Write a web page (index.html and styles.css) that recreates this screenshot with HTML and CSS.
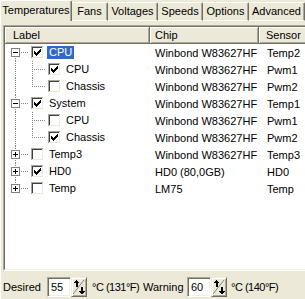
FILE: index.html
```html
<!DOCTYPE html>
<html>
<head>
<meta charset="utf-8">
<link rel="stylesheet" href="styles.css">
</head>
<body>
<div class="win">
  <div class="tabs">
    <div class="tab sel t1">Temperatures</div>
    <div class="tab t2">Fans</div>
    <div class="tab t3">Voltages</div>
    <div class="tab t4">Speeds</div>
    <div class="tab t5">Options</div>
    <div class="tab t6">Advanced</div>
  </div>
  <div class="page">
    <div class="list">
      <div class="list-in">
        <div class="hdr">
          <div class="hc h1">Label</div>
          <div class="hc h2">Chip</div>
          <div class="hc h3">Sensor</div>
        </div>
        <div class="rows">
          <div class="row">
            <div class="lab">
              <span class="ln first"><svg class="exp" width="9" height="9"><rect x="0.5" y="0.5" width="8" height="8" fill="#fff" stroke="#808080"/><path d="M2 4.5h5" stroke="#000"/></svg></span>
              <svg class="cb" width="13" height="13"><use href="#cbox"/><use href="#chk"/></svg>
              <span class="txt selected">CPU</span>
            </div>
            <div class="chip">Winbond W83627HF</div><div class="sen">Temp2</div>
          </div>
          <div class="row">
            <div class="lab">
              <span class="pass"></span><span class="ln tee"></span>
              <svg class="cb" width="13" height="13"><use href="#cbox"/><use href="#chk"/></svg>
              <span class="txt">CPU</span>
            </div>
            <div class="chip">Winbond W83627HF</div><div class="sen">Pwm1</div>
          </div>
          <div class="row">
            <div class="lab">
              <span class="pass"></span><span class="ln ell"></span>
              <svg class="cb" width="13" height="13"><use href="#cbox"/></svg>
              <span class="txt">Chassis</span>
            </div>
            <div class="chip">Winbond W83627HF</div><div class="sen">Pwm2</div>
          </div>
          <div class="row">
            <div class="lab">
              <span class="ln tee"><svg class="exp" width="9" height="9"><rect x="0.5" y="0.5" width="8" height="8" fill="#fff" stroke="#808080"/><path d="M2 4.5h5" stroke="#000"/></svg></span>
              <svg class="cb" width="13" height="13"><use href="#cbox"/><use href="#chk"/></svg>
              <span class="txt">System</span>
            </div>
            <div class="chip">Winbond W83627HF</div><div class="sen">Temp1</div>
          </div>
          <div class="row">
            <div class="lab">
              <span class="pass"></span><span class="ln tee"></span>
              <svg class="cb" width="13" height="13"><use href="#cbox"/></svg>
              <span class="txt">CPU</span>
            </div>
            <div class="chip">Winbond W83627HF</div><div class="sen">Pwm1</div>
          </div>
          <div class="row">
            <div class="lab">
              <span class="pass"></span><span class="ln ell"></span>
              <svg class="cb" width="13" height="13"><use href="#cbox"/><use href="#chk"/></svg>
              <span class="txt">Chassis</span>
            </div>
            <div class="chip">Winbond W83627HF</div><div class="sen">Pwm2</div>
          </div>
          <div class="row">
            <div class="lab">
              <span class="ln tee"><svg class="exp" width="9" height="9"><rect x="0.5" y="0.5" width="8" height="8" fill="#fff" stroke="#808080"/><path d="M2 4.5h5M4.5 2v5" stroke="#000"/></svg></span>
              <svg class="cb" width="13" height="13"><use href="#cbox"/></svg>
              <span class="txt">Temp3</span>
            </div>
            <div class="chip">Winbond W83627HF</div><div class="sen">Temp3</div>
          </div>
          <div class="row">
            <div class="lab">
              <span class="ln tee"><svg class="exp" width="9" height="9"><rect x="0.5" y="0.5" width="8" height="8" fill="#fff" stroke="#808080"/><path d="M2 4.5h5M4.5 2v5" stroke="#000"/></svg></span>
              <svg class="cb" width="13" height="13"><use href="#cbox"/><use href="#chk"/></svg>
              <span class="txt">HD0</span>
            </div>
            <div class="chip">HD0 (80,0GB)</div><div class="sen">HD0</div>
          </div>
          <div class="row">
            <div class="lab">
              <span class="ln ell"><svg class="exp" width="9" height="9"><rect x="0.5" y="0.5" width="8" height="8" fill="#fff" stroke="#808080"/><path d="M2 4.5h5M4.5 2v5" stroke="#000"/></svg></span>
              <svg class="cb" width="13" height="13"><use href="#cbox"/></svg>
              <span class="txt">Temp</span>
            </div>
            <div class="chip">LM75</div><div class="sen">Temp</div>
          </div>
        </div>
      </div>
    </div>
    <div class="foot">
      <span class="lbl w-des">Desired</span>
      <span class="edit">55</span>
      <span class="spin"><svg width="12" height="16"><use href="#spn"/></svg></span>
      <span class="lbl deg w-c1">°C (131°F)</span>
      <span class="lbl w-warn">Warning</span>
      <span class="edit">60</span>
      <span class="spin"><svg width="12" height="16"><use href="#spn"/></svg></span>
      <span class="lbl deg w-c2">°C (140°F)</span>
    </div>
  </div>
</div>
<svg class="defs" width="0" height="0">
  <defs>
    <g id="cbox" shape-rendering="crispEdges">
      <rect x="0" y="0" width="13" height="13" fill="#fff"/>
      <path d="M0 0h12v1h-11v11h-1z" fill="#aca899"/>
      <path d="M1 1h10v1h-9v9h-1z" fill="#404040"/>
      <path d="M12 0h1v13h-13v-1h12z" fill="#fff"/>
      <path d="M11 1h1v11h-11v-1h10z" fill="#ece9d8"/>
    </g>
    <path id="chk" shape-rendering="crispEdges" fill="#000" d="M3 5h1v3h-1zM4 6h1v3h-1zM5 7h1v3h-1zM6 6h1v3h-1zM7 5h1v3h-1zM8 4h1v3h-1zM9 3h1v3h-1z"/>
    <g id="spn" shape-rendering="crispEdges">
      <path d="M0 15L11 1" stroke="#808080" stroke-width="1" fill="none" shape-rendering="auto"/>
      <path d="M3 1h1v1h-1zM2 2h3v1h-3zM1 3h5v1h-5zM3 4h2v4h-2z" fill="#000"/>
      <path d="M8 8h2v4h-2zM6 12h6v1h-6zM7 13h4v1h-4zM8 14h2v1h-2z" fill="#000"/>
    </g>
  </defs>
</svg>
</body>
</html>
```
FILE: styles.css
```css
html, body {
  margin: 0;
  padding: 0;
}
body {
  width: 305px;
  height: 299px;
  overflow: hidden;
  background: #ece9d8;
  font-family: "Liberation Sans", Arial, sans-serif;
  font-size: 11px;
  color: #000;
}
.win {
  width: 305px;
  height: 299px;
  display: flex;
  flex-direction: column;
}
.tabs {
  display: flex;
  align-items: flex-end;
  height: 21px;
  flex: none;
}
.tab {
  box-sizing: border-box;
  height: 19px;
  display: flex;
  align-items: center;
  justify-content: center;
  border-top: 1px solid #fff;
  border-left: 1px solid #fff;
  border-right: 1px solid #716f64;
  border-bottom: 1px solid #fff;
  border-radius: 2px 2px 0 0;
  padding-bottom: 1px;
  white-space: nowrap;
  box-shadow: inset -1px 0 0 #aca899;
}
.tab.sel {
  height: 21px;
  border-bottom: none;
  padding-bottom: 3px;
}
.t1 { width: 72px; }
.t2 { width: 36px; border-left: none; }
.t3 { width: 50px; border-left: none; }
.t4 { width: 45px; border-left: none; }
.t5 { width: 46px; border-left: none; }
.t6 { width: 56px; border-left: none; }
.page {
  flex: 1;
  border-left: 1px solid #fff;
  padding: 4px 0 0 2px;
  display: flex;
  flex-direction: column;
}
.list {
  width: 310px;
  height: 246px;
  box-sizing: border-box;
  border: 1px solid;
  border-color: #aca899 #fff #fff #aca899;
  flex: none;
}
.list-in {
  height: 100%;
  box-sizing: border-box;
  border: 1px solid;
  border-color: #716f64 #f1efe2 #f1efe2 #716f64;
  background: #fff;
  overflow: hidden;
}
.hdr {
  display: grid;
  grid-template-columns: 145px 109px 1fr;
  height: 17px;
}
.hc {
  box-sizing: border-box;
  height: 17px;
  background: #ece9d8;
  border-right: 1px solid #716f64;
  border-bottom: 1px solid #716f64;
  box-shadow: inset 1px 1px 0 #fff, inset -1px -1px 0 #aca899;
  display: flex;
  align-items: center;
  padding-bottom: 1px;
}
.h1 { padding-left: 8px; }
.h2 { padding-left: 5px; }
.h3 { padding-left: 7px; }
.row {
  display: grid;
  grid-template-columns: 145px 109px 1fr;
  height: 17px;
  align-items: center;
  white-space: nowrap;
}
.lab {
  display: flex;
  align-items: center;
  height: 17px;
  padding-left: 2px;
}
.chip { padding-left: 5px; }
.sen { padding-left: 8px; }
.ln, .pass {
  flex: none;
  height: 17px;
  display: block;
}
.pass {
  width: 17px;
  background: repeating-linear-gradient(to bottom, #808080 0 1px, transparent 1px 2px) 8px 0 / 1px 17px no-repeat;
}
.ln { width: 24px; }
.ln.first {
  background:
    repeating-linear-gradient(to bottom, #808080 0 1px, transparent 1px 2px) 8px 8px / 1px 9px no-repeat,
    repeating-linear-gradient(to right, #808080 0 1px, transparent 1px 2px) 8px 8px / 14px 1px no-repeat;
}
.ln.tee {
  background:
    repeating-linear-gradient(to bottom, #808080 0 1px, transparent 1px 2px) 8px 0 / 1px 17px no-repeat,
    repeating-linear-gradient(to right, #808080 0 1px, transparent 1px 2px) 8px 8px / 14px 1px no-repeat;
}
.ln.ell {
  background:
    repeating-linear-gradient(to bottom, #808080 0 1px, transparent 1px 2px) 8px 0 / 1px 9px no-repeat,
    repeating-linear-gradient(to right, #808080 0 1px, transparent 1px 2px) 8px 8px / 14px 1px no-repeat;
}
.exp {
  display: block;
  margin: 4px 0 0 4px;
}
.cb {
  display: block;
  flex: none;
}
.txt {
  margin-left: 3px;
  padding: 0 2px;
  height: 13px;
  line-height: 13px;
}
.txt.selected {
  background: #316ac5;
  color: #fff;
}
.defs {
  position: absolute;
  width: 0;
  height: 0;
}
.foot {
  display: flex;
  align-items: center;
  padding-top: 6px;
  height: 20px;
  white-space: nowrap;
}
.lbl { flex: none; }
.deg { letter-spacing: -0.5px; }
.w-des { width: 44px; }
.w-c1 { width: 49px; margin-left: 5px; }
.w-warn { width: 44px; margin-left: 2px; }
.w-c2 { margin-left: 4px; }
.edit {
  flex: none;
  box-sizing: border-box;
  width: 24px;
  height: 20px;
  background: #fff;
  border: 1px solid;
  border-color: #aca899 #fff #fff #aca899;
  box-shadow: inset 1px 1px 0 #716f64, inset -1px -1px 0 #f1efe2;
  padding-left: 3px;
  display: flex;
  align-items: center;
}
.spin {
  flex: none;
  box-sizing: border-box;
  width: 16px;
  height: 20px;
  background: #ece9d8;
  border: 1px solid;
  border-color: #f1efe2 #716f64 #716f64 #f1efe2;
  box-shadow: inset 1px 1px 0 #fff, inset -1px -1px 0 #aca899;
  display: flex;
  align-items: center;
  justify-content: center;
}
.spin svg { display: block; }
```
